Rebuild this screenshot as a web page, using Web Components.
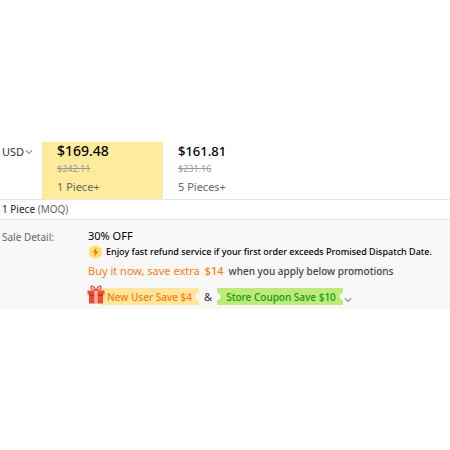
<!DOCTYPE html>
<html lang="en">
<head>
<meta charset="utf-8">
<title>Product price</title>
<style>
  body { margin: 0; background: #fff; color: #333; font: 11px/16px "Noto Sans", "Open Sans", sans-serif; }
</style>
</head>
<body>
<product-offer>
  <currency-select slot="currency"></currency-select>
  <price-tier slot="tiers" selected><span slot="price">$169.48</span><span slot="was">$242.11</span><span slot="quantity">1 Piece+</span></price-tier>
  <price-tier slot="tiers"><span slot="price">$161.81</span><span slot="was">$231.16</span><span slot="quantity">5 Pieces+</span></price-tier>
  <min-order slot="minimum">1 Piece <span slot="note">(MOQ)</span></min-order>
  <sale-detail slot="sale">
    <span slot="label">Sale Detail:</span>
    <span slot="discount">30% OFF</span>
    <span slot="service">Enjoy fast refund service if your first order exceeds Promised Dispatch Date.</span>
    <promo-line slot="promo">Buy it now, save extra <b slot="amount">$14</b><span slot="note">when you apply below promotions</span></promo-line>
    <coupon-tag slot="coupons" kind="gift">New User Save $4</coupon-tag>
    <span slot="coupons">&amp;</span>
    <coupon-tag slot="coupons" kind="store">Store Coupon Save $10</coupon-tag>
  </sale-detail>
</product-offer>

<script>
const define = (name, html) => customElements.define(name, class extends HTMLElement {
  constructor() {
    super();
    const t = document.createElement('template');
    t.innerHTML = html;
    this.attachShadow({ mode: 'open' }).append(t.content.cloneNode(true));
  }
});

define('product-offer', `
  <style>
    :host { display: block; padding-top: 142px; }
    .prices { display: grid; grid-template-columns: 42px minmax(0, 121px) minmax(0, 1fr); border-bottom: 1px solid #e6e6e6; }
  </style>
  <div class="prices"><slot name="currency"></slot><slot name="tiers"></slot></div>
  <slot name="minimum"></slot>
  <slot name="sale"></slot>`);

define('currency-select', `
  <style>
    :host { display: flex; align-items: center; align-self: start; height: 20px; padding-left: 2px; }
    select { appearance: none; border: 0; padding: 0; margin: 0; background: none; color: #333; font: inherit; line-height: 16px; }
    svg { width: 8px; height: 6px; pointer-events: none; }
  </style>
  <select aria-label="Currency"><option>USD</option></select>
  <svg viewBox="0 0 8 6" fill="none" stroke="#999" stroke-width="1.2"><path d="M1 1.5 4 4.5 7 1.5"/></svg>`);

define('price-tier', `
  <style>
    :host { display: flex; flex-direction: column; padding: 0 0 4px 15px; line-height: 18px; }
    :host([selected]) { background: #ffeb9c; }
    .price { color: #000; font-size: 13px; font-weight: 500; }
    :host([selected]) .price { font-size: 14px; }
    .was { color: #999; font-size: 9px; }
    .quantity { color: #666; font-size: 11px; line-height: 17px; }
  </style>
  <div class="price"><slot name="price"></slot></div>
  <s class="was"><slot name="was"></slot></s>
  <div class="quantity"><slot name="quantity"></slot></div>`);

define('min-order', `
  <style>
    :host { display: block; padding: 0 2px; font-size: 10px; line-height: 19px; border-bottom: 1px solid #e8e8e8; color: #222; }
    ::slotted(span) { color: #666; }
  </style>
  <slot></slot><slot name="note"></slot>`);

define('promo-line', `
  <style>
    :host { display: flex; gap: 5px; line-height: 22px; color: #ff7b0f; }
    ::slotted(b) { font-weight: 500; }
    ::slotted(span) { color: #444; font-size: 10px; font-weight: 500; }
  </style>
  <span><slot></slot></span><slot name="amount"></slot><slot name="note"></slot>`);

define('sale-detail', `
  <style>
    :host { display: grid; grid-template-columns: 86px minmax(0, 1fr); padding: 8px 2px 4px; background: #f8f8f8; }
    .label { color: #666; font-size: 10px; line-height: 18px; }
    .discount { color: #000; }
    .service { display: flex; align-items: center; gap: 3px; color: #000; font-size: 9px; font-weight: 500; white-space: nowrap; }
    .service svg { width: 15px; height: 14px; flex: none; }
    .coupons { display: flex; align-items: center; gap: 5px; margin-top: 6px; }
    button { display: flex; align-items: end; border: 0; padding: 0; background: none; height: 12px; margin-left: -4px; }
    button svg { width: 8px; height: 6px; }
  </style>
  <div class="label"><slot name="label"></slot></div>
  <div>
    <div class="discount"><slot name="discount"></slot></div>
    <div class="service">
      <svg viewBox="0 0 15 14"><path d="M6.3.4Q7.5-.2 8.7.4L13 2.8Q14 3.5 14 4.7V9.3Q14 10.5 13 11.2L8.7 13.6Q7.5 14.2 6.3 13.6L2 11.2Q1 10.5 1 9.3V4.7Q1 3.5 2 2.8Z" fill="#ffe07a"/><path d="M8.5 2.4 4.5 7.6H7L6.3 11.6 10.6 6.2H8Z" fill="#ff7300"/></svg>
      <slot name="service"></slot>
    </div>
    <slot name="promo"></slot>
    <div class="coupons">
      <slot name="coupons"></slot>
      <button aria-label="More promotions"><svg viewBox="0 0 8 6" fill="none" stroke="#999" stroke-width="1.4"><path d="M1 1.2 4 4.5 7 1.2"/></svg></button>
    </div>
  </div>`);

define('coupon-tag', `
  <style>
    :host { display: flex; align-items: center; height: 17px; line-height: 16px; font-size: 10px; font-weight: 500; white-space: nowrap; }
    svg { display: none; }
    :host([kind="gift"]) { color: #ff7b0f; padding-right: 7px;
      background: radial-gradient(circle at 100% 50%, #f8f8f8 3px, #ffe69a 4px) 100% 0 / calc(100% - 12px) 100% no-repeat; }
    :host([kind="gift"]) svg { display: block; width: 18px; height: 20px; margin: -3px 2px 0 -1px; flex: none; }
    :host([kind="store"]) { color: #129912; padding: 0 7px 0 9px;
      background: radial-gradient(circle at 0 50%, #f8f8f8 3px, #bdea78 4px) 0 0 / 50% 100% no-repeat,
        radial-gradient(circle at 100% 50%, #f8f8f8 3px, #bdea78 4px) 100% 0 / 51% 100% no-repeat; }
  </style>
  <svg viewBox="0 0 18 20"><path d="M2 9H16V18.5H2Z" fill="#f04a32"/><path d="M.5 5.5H17.5V9.5H.5Z" fill="#f9492f"/><path d="M2 9.5H16V11H2Z" fill="#cf2b20"/><path d="M7.3 5.5H10.7V18.5H7.3Z" fill="#ffb3a0"/><path d="M9 5.2C7 .8 4.5.3 4 2.1 3.5 4 6 5.2 9 5.2ZM9 5.2C11 .8 13.5.3 14 2.1 14.5 4 12 5.2 9 5.2Z" fill="none" stroke="#e8604e" stroke-width="1.5"/></svg>
  <span><slot></slot></span>`);
</script>
</body>
</html>
